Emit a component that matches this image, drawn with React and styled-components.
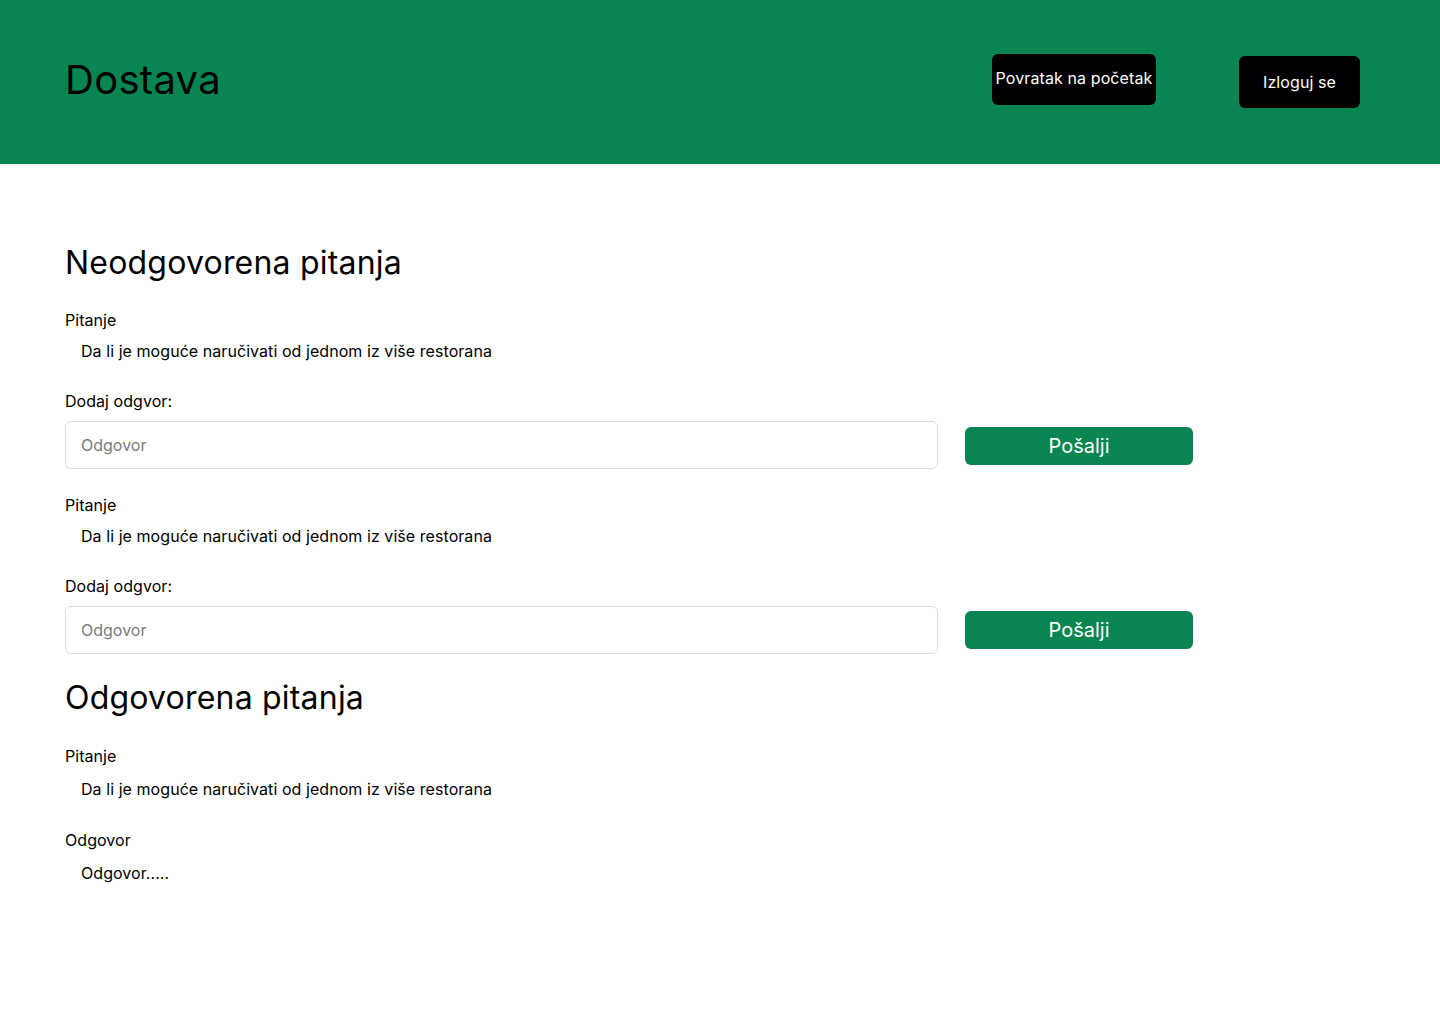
import React from "react";
import styled, { createGlobalStyle } from "styled-components";

const GREEN = "#098552";

const Global = createGlobalStyle`
  * { box-sizing: border-box; }
  body {
    margin: 0;
    font-family: Inter, "Noto Sans", sans-serif;
    color: #000;
    background: #fff;
  }
`;

const Header = styled.header`
  height: 164px;
  background: ${GREEN};
  display: flex;
  align-items: center;
  padding: 0 80px 0 65px;
`;

const Brand = styled.h1`
  margin: 0 0 4px;
  font-size: 40px;
  font-weight: 400;
  line-height: 48px;
  letter-spacing: 0.3px;
  flex: 1;
`;

const NavButton = styled.button`
  background: #000;
  color: #fff;
  border: none;
  border-radius: 6px;
  font-family: Inter, sans-serif;
  font-size: 16px;
  letter-spacing: 0.1px;
  height: ${(p) => p.$h}px;
  width: ${(p) => p.$w}px;
  padding: 0 0 ${(p) => p.$pb || 0}px;
  margin-left: ${(p) => p.$ml || 0}px;
  margin-top: ${(p) => p.$mt || 0}px;
  cursor: pointer;
`;

const Main = styled.main`
  padding: 79px 65px 40px;
`;

const SectionTitle = styled.h2`
  margin: ${(p) => p.$mt || 0}px 0 ${(p) => p.$mb || 28}px;
  font-size: 32px;
  font-weight: 400;
  line-height: 39px;
  letter-spacing: 0.2px;
`;

const Label = styled.div`
  font-size: 16px;
  line-height: 20px;
  letter-spacing: 0.05px;
`;

const Value = styled.div`
  font-size: 16px;
  line-height: 20px;
  letter-spacing: 0.06px;
  padding-left: 16px;
  margin-top: ${(p) => p.$mt || 11}px;
`;

const Block = styled.div`
  margin-top: ${(p) => p.$mt || 0}px;
`;

const AnswerRow = styled.div`
  display: flex;
  align-items: center;
  gap: 27px;
  margin-top: 10px;
`;

const Input = styled.input`
  width: 873px;
  height: 48px;
  border: 1px solid #dcdcdc;
  border-radius: 6px;
  padding: 0 15px;
  font-family: Inter, sans-serif;
  font-size: 16px;
  color: #000;
  outline: none;
  &::placeholder { color: #7a7a7a; }
`;

const SendButton = styled.button`
  width: 228px;
  height: 38px;
  background: ${GREEN};
  color: #fff;
  border: none;
  border-radius: 6px;
  font-family: Inter, sans-serif;
  font-size: 20px;
  margin-top: ${(p) => p.$mt || 0}px;
  cursor: pointer;
`;

const question = "Da li je moguće naručivati od jednom iz više restorana";

function Unanswered({ first }) {
  return (
    <Block $mt={first ? 0 : 26}>
      <Label>Pitanje</Label>
      <Value>{question}</Value>
      <Block $mt={30}>
        <Label>Dodaj odgvor:</Label>
      </Block>
      <AnswerRow>
        <Input placeholder="Odgovor" />
        <SendButton $mt={first ? 2 : 0}>Pošalji</SendButton>
      </AnswerRow>
    </Block>
  );
}

export default function App() {
  return (
    <>
      <Global />
      <Header>
        <Brand>Dostava</Brand>
        <NavButton $w={164} $h={51} $mt={-5} $pb={3}>Povratak na početak</NavButton>
        <NavButton $w={121} $h={52} $ml={83} $mt={0}>Izloguj se</NavButton>
      </Header>
      <Main>
        <SectionTitle>Neodgovorena pitanja</SectionTitle>
        <Unanswered first />
        <Unanswered />
        <SectionTitle $mt={24} $mb={29}>Odgovorena pitanja</SectionTitle>
        <Label>Pitanje</Label>
        <Value $mt={13}>{question}</Value>
        <Block $mt={31}>
          <Label>Odgovor</Label>
        </Block>
        <Value $mt={13}>Odgovor.....</Value>
      </Main>
    </>
  );
}
